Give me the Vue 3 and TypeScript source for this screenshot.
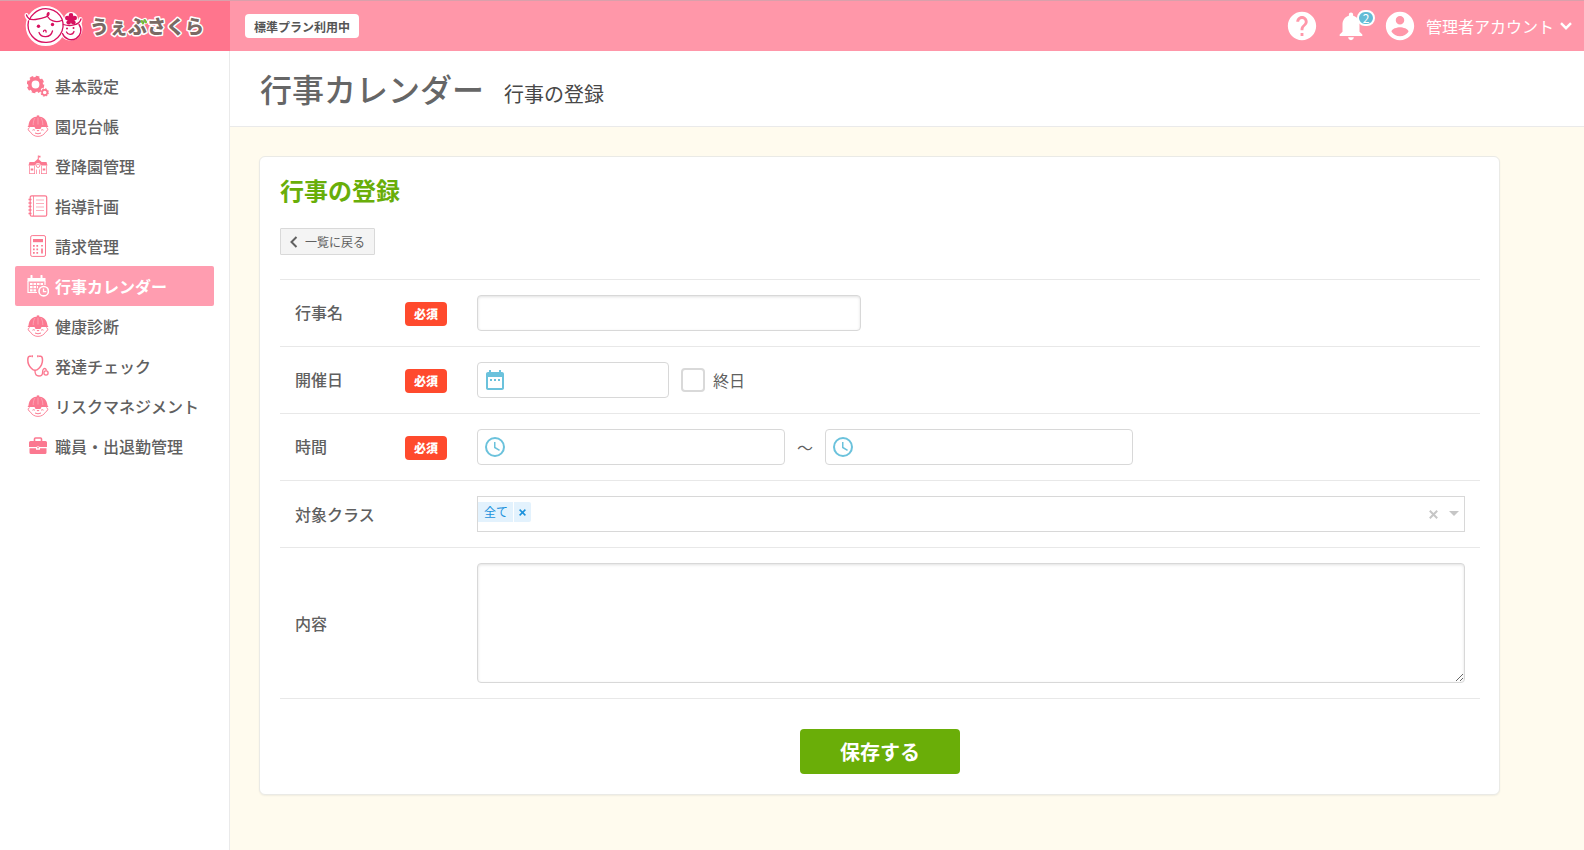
<script setup lang="ts">
import { ref } from 'vue'

type IconName = 'gear' | 'child' | 'school' | 'notebook' | 'calculator' | 'calendar' | 'stethoscope' | 'briefcase'

interface MenuItem {
  label: string
  icon: IconName
  active?: boolean
}

const menu: MenuItem[] = [
  { label: '基本設定', icon: 'gear' },
  { label: '園児台帳', icon: 'child' },
  { label: '登降園管理', icon: 'school' },
  { label: '指導計画', icon: 'notebook' },
  { label: '請求管理', icon: 'calculator' },
  { label: '行事カレンダー', icon: 'calendar', active: true },
  { label: '健康診断', icon: 'child' },
  { label: '発達チェック', icon: 'stethoscope' },
  { label: 'リスクマネジメント', icon: 'child' },
  { label: '職員・出退勤管理', icon: 'briefcase' },
]

const eventName = ref('')
const eventDate = ref('')
const allDay = ref(false)
const startTime = ref('')
const endTime = ref('')
const classes = ref<string[]>(['全て'])
const picked = ref('')
const content = ref('')

function addClass() {
  if (picked.value && !classes.value.includes(picked.value)) classes.value.push(picked.value)
  picked.value = ''
}

function removeClass(name: string) {
  classes.value = classes.value.filter((c) => c !== name)
}
</script>

<template>
  <div class="app">
    <header class="topbar">
      <a class="logo" href="#">
        <svg width="190" height="46" viewBox="20 3 190 46" role="img" aria-label="うぇぶさくら">
          <g fill="#fff" stroke="#fff" stroke-width="4" stroke-linecap="round" stroke-linejoin="round">
            <circle cx="45.7" cy="26" r="18" />
            <circle cx="70.5" cy="28.5" r="10" />
            <circle cx="71" cy="19" r="5" />
            <path d="M26.5 15q1 5 6 5M80.500 19q0 5-4 6" fill="none" />
          </g>
          <g fill="none" stroke="#d7105f" stroke-width="1.300" stroke-linecap="round">
            <path d="M28.500 21A17.500 17.500 0 1 0 62 19A17.500 17.500 0 0 0 34 13.500Q31 16 29.500 19.500" />
            <path d="M26.500 15q1.500 5.500 9 4.500c8-1 14-3 13.500-6.500c-.7-1.600-2.700 1.400-1.500 3.500c2 3.500 8 7 14 4" />
            <path d="M62.500 33.500A9.500 9.500 0 1 0 79 24.500" />
            <path d="M63.500 24.500c6 2 16 1 17.500-5.500" />
            <path d="M39 32.500c2 5.500 11.500 6 13.500-1.500M43.500 31.500c0-2 3-2 2.500.5" />
            <path d="M66.500 32c1.500 3.500 6.500 3 7.500-.5" />
          </g>
          <g fill="#d7105f">
            <circle cx="38.500" cy="26.300" r="1.700" />
            <circle cx="52.500" cy="24.500" r="1.700" />
            <circle cx="67" cy="28.500" r="1" />
            <circle cx="73.500" cy="28" r="1" />
            <circle cx="71" cy="15.400" r="2.300" />
            <circle cx="74.700" cy="18" r="2.300" />
            <circle cx="73.300" cy="22.200" r="2.300" />
            <circle cx="68.700" cy="22.200" r="2.300" />
            <circle cx="67.300" cy="18" r="2.300" />
            <circle cx="71" cy="19" r="3" />
          </g>
          <text class="wordmark" x="90" y="34">うぇぶさくら</text>
          <path d="M141.500 21l1.500 2.500M144.500 20l1.500 2.500" stroke="#7cc62f" stroke-width="2" stroke-linecap="round" />
        </svg>
      </a>
      <span class="plan">標準プラン利用中</span>
      <div class="tools">
        <button class="tool" type="button" aria-label="ヘルプ">
          <svg width="34" height="34" viewBox="0 0 24 24" fill="currentColor"><path d="M12 2C6.480 2 2 6.480 2 12s4.480 10 10 10 10-4.480 10-10S17.520 2 12 2zm1 17h-2v-2h2v2zm2.070-7.750l-.9.920C13.450 12.900 13 13.500 13 15h-2v-.5c0-1.100.450-2.100 1.170-2.830l1.240-1.260c.370-.360.590-.860.590-1.410 0-1.100-.9-2-2-2s-2 .9-2 2H8c0-2.210 1.790-4 4-4s4 1.790 4 4c0 .880-.360 1.680-.930 2.250z" /></svg>
        </button>
        <button class="tool" type="button" aria-label="お知らせ">
          <svg width="34" height="34" viewBox="0 0 24 24" fill="currentColor"><path d="M12 22c1.100 0 2-.9 2-2h-4c0 1.100.890 2 2 2zm6-6v-5c0-3.070-1.640-5.640-4.500-6.320V4c0-.830-.670-1.500-1.500-1.500s-1.500.670-1.500 1.500v.680C7.630 5.360 6 7.920 6 11v5l-2 2v1h16v-1l-2-2z" /></svg>
          <span class="count">2</span>
        </button>
        <button class="tool account" type="button">
          <svg width="34" height="34" viewBox="0 0 24 24" fill="currentColor"><path d="M12 2C6.480 2 2 6.480 2 12s4.480 10 10 10 10-4.480 10-10S17.520 2 12 2zm0 3c1.660 0 3 1.340 3 3s-1.340 3-3 3-3-1.340-3-3 1.340-3 3-3zm0 14.200c-2.500 0-4.710-1.280-6-3.220.030-1.990 4-3.080 6-3.080 1.990 0 5.970 1.090 6 3.080-1.290 1.940-3.500 3.220-6 3.220z" /></svg>
          <span class="account-name">管理者アカウント</span>
          <svg width="12" height="8" viewBox="0 0 12 8" fill="none" stroke="currentColor" stroke-width="2.400"><path d="M1 1.200l5 5 5-5" /></svg>
        </button>
      </div>
    </header>

    <div class="body">
      <nav class="sidebar">
        <a v-for="item in menu" :key="item.label" class="menu-item" :class="{ active: item.active }" href="#">
          <svg width="22" height="22" viewBox="0 0 22 22" fill="none" stroke="currentColor" aria-hidden="true">
            <template v-if="item.icon === 'gear'">
              <circle cx="8.500" cy="9.500" r="5.700" stroke-width="3.600" />
              <circle cx="8.500" cy="9.500" r="7.800" stroke-width="2" stroke-dasharray="3.700 2.426" />
              <circle cx="17.700" cy="17.500" r="2.600" stroke-width="1.600" />
              <circle cx="17.700" cy="17.500" r="3.600" stroke-width="1.200" stroke-dasharray="1.600 1.227" />
            </template>
            <template v-else-if="item.icon === 'child'">
              <path d="M1.500 10.500C2 4.500 6 1.500 11 1.500s9 3 9.500 9l1 1.500H.5z" fill="currentColor" stroke="none" />
              <path d="M9.800.4h2.400v1.600H9.800z" fill="currentColor" stroke="none" />
              <path d="M8 3C6.500 5 6.200 8 6.200 10M14 3c1.500 2 1.800 5 1.800 7M11 2.500v7" stroke="#fff" stroke-width=".5" stroke-opacity=".6" />
              <path d="M2.800 12.700c-2 0-2.400 2.800.2 3.800C5 20 8 21.400 11 21.400s6-1.400 8-4.900c2.600-1 2.200-3.800.2-3.800" stroke-width=".9" />
              <path d="M7.500 12h7l-1 2h-5zM9.500 15h3l-1.500 1.500z" fill="currentColor" stroke="none" />
              <path d="M5.500 15.200q1.200-1 2.400 0M14.100 15.200q1.200-1 2.400 0M8 18q3 1.600 6 0" stroke-width="1" />
            </template>
            <template v-else-if="item.icon === 'school'">
              <path d="M11.300.5v3.500" stroke-width="1" />
              <path d="M11.500.8h2v1.800h-2zM11 3.800l4 3.500h-8zM2.500 7h5.200L9 5.500h4L14.300 7h5.200L20.500 10.500H13.500a2.500 2.500 0 0 0-5 0H1.500z" fill="currentColor" stroke="none" />
              <path d="M2.500 10.500v8M19.500 10.500v8M7.500 11v8M14.500 11v8M2 18.500h6M14 18.500h6M9.500 14.500v4.500M12.500 14.500v4.500" stroke-width=".7" />
              <circle cx="11" cy="10.800" r="1.700" stroke-width=".8" />
              <path d="M3.700 14.500h2.600M15.700 14.500h2.600" stroke-width="2" />
            </template>
            <template v-else-if="item.icon === 'notebook'">
              <rect x="3.200" y=".8" width="16.500" height="20.400" rx="1.500" stroke-width="1.200" />
              <path d="M6.500 1v20" stroke-width=".8" />
              <path d="M1.500 4.500h3M1.500 8h3M1.500 11.500h3M1.500 15h3M1.500 18.500h3" stroke-width="1.300" />
              <path d="M9 5h8M9 8.500h8M9 12h8M9 15.500h8" stroke-width=".6" />
            </template>
            <template v-else-if="item.icon === 'calculator'">
              <rect x="3.700" y=".6" width="14.800" height="20.800" rx="1.500" stroke-width="1" />
              <path d="M6 4h10v3.200H6z" fill="currentColor" stroke="none" />
              <path d="M6 10.800h6.500M6 14.300h6.500M6 17.800h6.500" stroke-width="1.700" stroke-dasharray="1.700 1.700" />
              <path d="M15 9.900v1.700M15 13.400v5.200" stroke-width="1.700" />
            </template>
            <template v-else-if="item.icon === 'calendar'">
              <path d="M4.500.8v2.500M14.500.8v2.500" stroke-width="2" stroke-linecap="round" />
              <path d="M.5 3h18v3.500H.5z" fill="currentColor" stroke="none" />
              <path d="M1 6v11.500h9M18 6v4" stroke-width="1.200" />
              <path d="M3 9h13M3 12.200h8M3 15.400h7" stroke-width="2.200" stroke-dasharray="2.600 .9" />
              <circle cx="16.700" cy="16.200" r="4.700" stroke-width="1.600" />
              <path d="M16.500 13.500v3.200h2.800" stroke-width="1.300" />
            </template>
            <template v-else-if="item.icon === 'stethoscope'">
              <path d="M4.500 1.200H2.500Q.8 1.500.8 5q0 5 3.500 8.200Q8 17.500 12 13.200q3.500-3.400 3.500-8.200 0-3.500-1.700-3.800H11.500" stroke-width="1.500" />
              <path d="M5.300.2v2M10.800.2v2" stroke-width="1.400" />
              <path d="M8 15v1q0 5 4 5 3.500 0 3.500-3t1-4q2-1.500 3 1.500" stroke-width="1.300" />
              <circle cx="19" cy="18" r="2.100" stroke-width="1.300" />
            </template>
            <template v-else>
              <path d="M7.500 6V4q0-1 1-1h5q1 0 1 1v2" stroke-width="1.600" />
              <path d="M3.500 6h15q1.500 0 1.500 1.500V12H2V7.500Q2 6 3.500 6zM2.500 13.200H9v1.500h4v-1.500h6.500v4.300q0 1.500-1.500 1.500H4q-1.500 0-1.500-1.500z" fill="currentColor" stroke="none" />
              <path d="M10 11.500h2v2h-2z" fill="currentColor" stroke="#fff" stroke-width=".5" />
            </template>
          </svg>
          <span>{{ item.label }}</span>
        </a>
      </nav>

      <main class="main">
        <div class="page-head">
          <h1>行事カレンダー</h1>
          <p>行事の登録</p>
        </div>

        <section class="card">
          <h2>行事の登録</h2>
          <a class="back" href="#">
            <svg width="8" height="12" viewBox="0 0 8 12" fill="none" stroke="currentColor" stroke-width="2"><path d="M6.500 1l-5 5 5 5" /></svg>
            <span>一覧に戻る</span>
          </a>

          <form @submit.prevent>
            <div class="row">
              <div class="label"><label for="event-name">行事名</label><span class="required">必須</span></div>
              <div class="field"><input id="event-name" v-model="eventName" class="control inset name" type="text" /></div>
            </div>

            <div class="row">
              <div class="label"><label for="event-date">開催日</label><span class="required">必須</span></div>
              <div class="field">
                <div class="icon-input date">
                  <svg width="24" height="24" viewBox="0 0 24 24" fill="currentColor"><path d="M9 11H7v2h2v-2zm4 0h-2v2h2v-2zm4 0h-2v2h2v-2zm2-7h-1V2h-2v2H8V2H6v2H5c-1.110 0-1.990.9-1.990 2L3 20c0 1.100.890 2 2 2h14c1.100 0 2-.9 2-2V6c0-1.100-.9-2-2-2zm0 16H5V9h14v11z" /></svg>
                  <input id="event-date" v-model="eventDate" class="control" type="text" />
                </div>
                <label class="check"><input v-model="allDay" type="checkbox" /><span>終日</span></label>
              </div>
            </div>

            <div class="row">
              <div class="label"><label for="start-time">時間</label><span class="required">必須</span></div>
              <div class="field">
                <div class="icon-input time">
                  <svg width="24" height="24" viewBox="0 0 24 24" fill="none" stroke="currentColor"><circle cx="12" cy="12" r="9" stroke-width="2" /><path d="M11.750 7v5.500l4.800 2.900" stroke-width="1.500" /></svg>
                  <input id="start-time" v-model="startTime" class="control" type="text" />
                </div>
                <span class="tilde">～</span>
                <div class="icon-input time">
                  <svg width="24" height="24" viewBox="0 0 24 24" fill="none" stroke="currentColor"><circle cx="12" cy="12" r="9" stroke-width="2" /><path d="M11.750 7v5.500l4.800 2.900" stroke-width="1.500" /></svg>
                  <input v-model="endTime" class="control" type="text" aria-label="終了時間" />
                </div>
              </div>
            </div>

            <div class="row">
              <div class="label"><label for="target-class">対象クラス</label></div>
              <div class="field">
                <div class="multi">
                  <span v-for="name in classes" :key="name" class="tag">
                    <span class="tag-name">{{ name }}</span>
                    <button type="button" :aria-label="name + 'を外す'" @click="removeClass(name)">
                      <svg width="7" height="7" viewBox="0 0 7 7" fill="none" stroke="currentColor" stroke-width="1.500"><path d="M.6.6l5.800 5.800M6.400.6L.6 6.400" /></svg>
                    </button>
                  </span>
                  <select id="target-class" v-model="picked" @change="addClass">
                    <option value=""></option>
                    <option value="全て">全て</option>
                  </select>
                  <button class="clear" type="button" aria-label="クリア" @click="classes = []">
                    <svg width="9" height="9" viewBox="0 0 9 9" fill="none" stroke="currentColor" stroke-width="2"><path d="M.8.8l7.400 7.400M8.200.8L.8 8.200" /></svg>
                  </button>
                  <svg class="caret" width="10" height="5" viewBox="0 0 10 5" fill="currentColor"><path d="M0 0h10L5 5z" /></svg>
                </div>
              </div>
            </div>

            <div class="row">
              <div class="label"><label for="content">内容</label></div>
              <div class="field"><textarea id="content" v-model="content" class="control inset"></textarea></div>
            </div>

            <div class="actions"><button class="save" type="submit">保存する</button></div>
          </form>
        </section>
      </main>
    </div>
  </div>
</template>

<style>
body {
  margin: 0;
}
</style>

<style scoped>
.app {
  display: flex;
  flex-direction: column;
  min-height: 100vh;
  font-family: "Noto Sans CJK JP", "Noto Sans", sans-serif;
  font-size: 16px;
  line-height: 24px;
  color: #606060;
}
.app * {
  box-sizing: border-box;
}
button,
input,
select,
textarea {
  font: inherit;
  color: inherit;
  margin: 0;
}
button {
  padding: 0;
  border: 0;
  background: none;
  cursor: pointer;
}
a {
  color: inherit;
  text-decoration: none;
}
svg {
  display: block;
  flex: none;
}
h1,
h2,
p {
  margin: 0;
}

.topbar {
  display: flex;
  align-items: center;
  height: 51px;
  border-top: 1px solid #d9a0ab;
  background: #ff97a9;
}
.logo {
  display: flex;
  align-items: center;
  align-self: stretch;
  flex: none;
  width: 230px;
  padding-left: 20px;
  background: #ff758d;
}
.wordmark {
  font-size: 19px;
  font-weight: 900;
  fill: #7a6a64;
  stroke: #fff;
  stroke-width: 3px;
  stroke-linejoin: round;
  paint-order: stroke;
}
.plan {
  margin-left: 15px;
  padding: 1px 9px 0;
  border-radius: 4px;
  background: #fff;
  color: #555;
  font-size: 12px;
  line-height: 23px;
  font-weight: 700;
  white-space: nowrap;
}
.tools {
  display: flex;
  gap: 15px;
  margin-left: auto;
  padding-right: 12px;
}
.tool {
  position: relative;
  color: #fff;
}
.count {
  position: absolute;
  top: 1px;
  right: -7px;
  width: 18px;
  height: 16px;
  border: 2px solid #fff;
  border-radius: 8px;
  background: #62bcd6;
  font-size: 12px;
  line-height: 12px;
}
.account {
  display: flex;
  align-items: center;
  white-space: nowrap;
}
.account-name {
  margin: 0 6px 0 9px;
}

.body {
  display: flex;
  flex: 1;
}
.sidebar {
  flex: none;
  width: 230px;
  padding: 15px;
  border-right: 1px solid #eaeaea;
}
.menu-item {
  display: flex;
  align-items: center;
  gap: 6px;
  height: 40px;
  padding-left: 12px;
  border-radius: 2px;
  font-weight: 500;
  white-space: nowrap;
}
.menu-item svg {
  color: #fb7890;
}
.menu-item.active {
  background: #ff9db0;
  color: #fff;
  font-weight: 700;
}
.menu-item.active svg {
  color: #fff;
}
.main {
  flex: 1;
  min-width: 0;
  background: #fffbee;
}
.page-head {
  display: flex;
  align-items: baseline;
  gap: 20px;
  padding: 13px 30px 14px;
  border-bottom: 1px solid #eaeaea;
  background: #fff;
}
h1 {
  font-size: 32px;
  line-height: 48px;
  font-weight: 500;
  color: #666;
}
.page-head p {
  font-size: 20px;
  color: #484848;
}
.card {
  max-width: 1241px;
  margin: 29px 30px 29px 29px;
  padding: 19px 19px 20px 20px;
  border: 1px solid #eaeae6;
  border-radius: 6px;
  background: #fff;
  box-shadow: 0 1px 2px rgba(0, 0, 0, 0.06);
}
h2 {
  font-size: 24px;
  line-height: 28px;
  font-weight: 700;
  color: #69ae09;
}
.back {
  display: inline-flex;
  align-items: center;
  gap: 7px;
  height: 27px;
  margin: 24px 0;
  padding: 0 9px;
  border: 1px solid #d9d9d9;
  border-radius: 1px;
  background: #f4f4f4;
  font-size: 12px;
}
form {
  border-top: 1px solid #e8e8e8;
}
.row {
  display: flex;
  align-items: center;
  padding: 15px;
  border-bottom: 1px solid #e8e8e8;
}
.label {
  display: flex;
  flex: none;
  align-items: baseline;
  justify-content: space-between;
  width: 152px;
  margin-right: 30px;
  font-weight: 500;
}
.required {
  padding: 0 9px;
  border-radius: 4px;
  background: #ff4a2d;
  color: #fff;
  font-size: 12px;
  font-weight: 900;
}
.field {
  display: flex;
  flex: 1;
  align-items: center;
  min-width: 0;
}
.control {
  display: block;
  width: 100%;
  height: 36px;
  padding: 0 12px;
  border: 1px solid #d8d8d8;
  border-radius: 4px;
  background: #fff;
}
.inset {
  box-shadow: inset 0 1px 3px rgba(0, 0, 0, 0.12);
}
.name {
  width: 384px;
}
.icon-input {
  position: relative;
}
.icon-input svg {
  position: absolute;
  top: 6px;
  left: 6px;
  color: #6bc2dc;
}
.icon-input .control {
  padding-left: 36px;
}
.date {
  width: 192px;
}
.time {
  width: 308px;
}
.tilde {
  width: 40px;
  text-align: center;
}
.check {
  display: flex;
  align-items: center;
  gap: 8px;
  margin-left: 12px;
}
.check input {
  width: 24px;
  height: 24px;
  border: 2px solid #d9d9d9;
  border-radius: 4px;
  background: #fff;
  appearance: none;
}
.check input:checked {
  background: #6bc2dc;
}
.multi {
  position: relative;
  display: flex;
  gap: 4px;
  width: 100%;
  height: 36px;
  border: 1px solid #d8d8d8;
}
.tag {
  display: flex;
  flex: none;
  gap: 1px;
  height: 20px;
  margin-top: 5px;
  color: #1a91dc;
  font-size: 12px;
  line-height: 20px;
}
.tag-name {
  padding: 0 5px 0 6px;
  background: #e3f2fd;
}
.tag button {
  padding: 0 5px;
  border-radius: 0 2px 2px 0;
  background: #e3f2fd;
}
.multi select {
  flex: 1;
  min-width: 0;
  border: 0;
  background: transparent;
  appearance: none;
}
.clear {
  position: absolute;
  top: 13px;
  right: 26px;
  color: #c6c6c6;
}
.caret {
  position: absolute;
  top: 14px;
  right: 5px;
  color: #c6c6c6;
  pointer-events: none;
}
textarea.control {
  height: 120px;
  padding: 8px 12px;
  resize: vertical;
}
.actions {
  display: flex;
  justify-content: center;
  padding-top: 30px;
}
.save {
  width: 160px;
  height: 45px;
  border-radius: 4px;
  background: #6aae08;
  color: #fff;
  font-size: 20px;
  font-weight: 700;
}
</style>
